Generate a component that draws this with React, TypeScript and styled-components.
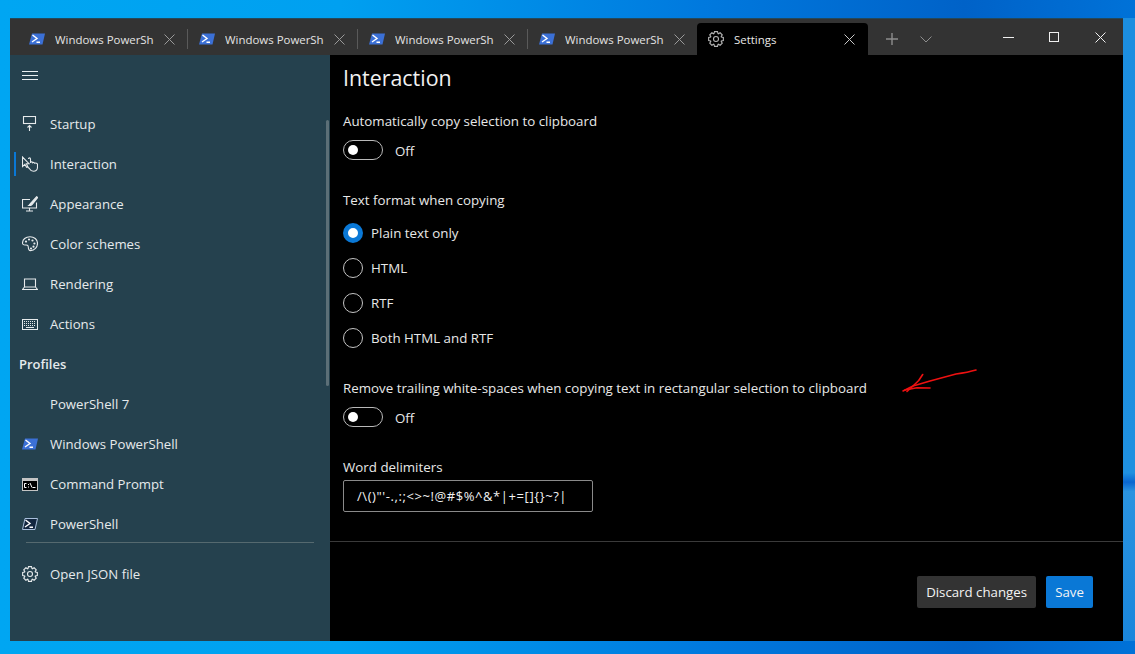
import React from "react";
import styled, { createGlobalStyle } from "styled-components";

const Global = createGlobalStyle`
  html, body { margin: 0; padding: 0; height: 100%; }
  body { font-family: "Open Sans", "Liberation Sans", sans-serif; overflow: hidden; }
  #root { height: 100%; }
  * { box-sizing: border-box; }
`;

const Desktop = styled.div`
  width: 1135px; height: 654px; padding: 18px 12px 13px 10px;
  background:
    linear-gradient(180deg, #1c8ee0 0%, #1f90e0 73%, #0a66d0 74.5%, #2a93e0 76%, #1a86dc 100%) right 0 top 18px / 12px 623px no-repeat,
    linear-gradient(90deg, #00a6f2 0%, #00a0f0 30%, #0079de 62%, #0062c8 85%, #0072d8 100%);
`;
const Win = styled.div`
  position: relative; height: 100%; display: flex; flex-direction: column;
  background: #000; border-top: 1px solid #24485a; color: #fff;
`;
const TabBar = styled.div`
  height: 36px; flex: none; display: flex; align-items: flex-end; background: #333333; padding-left: 8px;
`;
const Tab = styled.div<{ $active?: boolean }>`
  position: relative; width: ${(p) => (p.$active ? "171px" : "170px")}; height: 32px; flex: none; display: flex; align-items: center;
  margin-left: ${(p) => (p.$active ? "-1px" : "0")};
  padding: 0 13px 0 11px; border-radius: 4px 4px 0 0;
  background: ${(p) => (p.$active ? "#000" : "transparent")};
  color: ${(p) => (p.$active ? "#e8e8e8" : "#e4e4e4")};
`;
const TabSep = styled.span`
  position: absolute; right: 0; top: 6px; width: 1px; height: 20px; background: #5a5a5a;
`;
const TabGear = styled.span`
  display: flex; color: #b4b4b4;
`;
const TabTitle = styled.span`
  margin-left: 10px; flex: 1; font-size: 11.45px; white-space: nowrap; overflow: hidden;
`;
const TabTools = styled.div`
  display: flex; align-items: center; height: 32px; margin-left: 18px; gap: 22px; color: #8d8d8d;
`;
const Caption = styled.div`
  margin-left: auto; display: flex; align-self: flex-start; height: 36px;
`;
const CapBtn = styled.div`
  width: 46px; height: 36px; display: flex; align-items: center; justify-content: center; color: #f0f0f0;
`;
const Body = styled.div`
  flex: 1; display: flex; min-height: 0;
`;
const Sidebar = styled.nav`
  position: relative; width: 320px; flex: none; background: #25414e; display: flex; flex-direction: column;
  padding-top: 16px;
`;
const Burger = styled.div`
  height: 10px; padding-left: 12px; margin-bottom: 23px; color: #eaf0f2; display: flex; align-items: center;
`;
const NavItem = styled.div<{ $active?: boolean }>`
  position: relative; height: 40px; display: flex; align-items: center; padding-left: 12px; gap: 12px;
  font-size: 13.2px; color: #e6eaec;
  ${(p) => p.$active && `&::before { content: ""; position: absolute; left: 4px; top: 8px; width: 2px; height: 24px; background: #0a78d6; }`}
`;
const IconSlot = styled.span`
  width: 16px; height: 16px; flex: none; display: flex; align-items: center; justify-content: center;
`;
const Heading = styled.div`
  height: 40px; display: flex; align-items: center; padding-left: 9px; font-size: 13px; font-weight: 600; color: #e6eaec;
`;
const NavRule = styled.div`
  height: 1px; margin: -2px 16px 11px 16px; background: #55696f; flex: none;
`;
const ScrollThumb = styled.div`
  position: absolute; left: 316px; top: 65px; width: 3px; height: 266px; background: #5c6f77; border-radius: 2px;
`;
const Main = styled.main`
  flex: 1; min-width: 0; display: flex; flex-direction: column; background: #000;
`;
const Scroll = styled.div`
  flex: none; height: 487px; padding: 7px 0 0 13px; border-bottom: 1px solid #3a3a3a; position: relative;
`;
const Title = styled.h1`
  margin: 0 0 17px; font-size: 21.4px; line-height: 32px; font-weight: 400; color: #f2f2f2;
`;
const Label = styled.div`
  font-size: 13.33px; line-height: 20px; color: #e8e8e8; white-space: nowrap;
`;
const ToggleRow = styled.div`
  display: flex; align-items: center; height: 20px; margin-top: 9px; gap: 12px; font-size: 13.33px; color: #e8e8e8;
`;
const Track = styled.span`
  width: 40px; height: 20px; border: 1px solid #b9b9b9; border-radius: 10px; display: flex; align-items: center; padding-left: 4px;
`;
const Knob = styled.span`
  width: 10px; height: 10px; border-radius: 50%; background: #fff;
`;
const ToggleText = styled.span`
  margin-top: 2px;
`;
const Section = styled.section`
  margin-bottom: 30px;
`;
const RadioList = styled.div`
  display: flex; flex-direction: column; gap: 15px; margin-top: 13px;
`;
const RadioRow = styled.div`
  display: flex; align-items: center; height: 20px; gap: 8px; font-size: 13.33px; color: #e8e8e8;
`;
const RadioDot = styled.span<{ $on?: boolean }>`
  width: 20px; height: 20px; border-radius: 50%; display: flex; align-items: center; justify-content: center;
  border: ${(p) => (p.$on ? "5px solid #0a78d6" : "1px solid #c4c4c4")};
  background: ${(p) => (p.$on ? "#fff" : "transparent")};
`;
const Field = styled.div`
  width: 250px; height: 32px; margin-top: 3px; border: 1px solid #8a8a8a; border-radius: 2px;
  display: flex; align-items: center; padding-left: 13px; font-size: 13px; letter-spacing: .58px; color: #f2f2f2; white-space: nowrap;
`;
const Footer = styled.div`
  flex: 1; display: flex; justify-content: flex-end; align-items: flex-start; gap: 10px; padding: 34px 30px 0 0;
`;
const Button = styled.button<{ $primary?: boolean }>`
  height: 32px; min-width: 47px; border: 0; border-radius: 2px; padding: 0 9px; font: inherit; font-size: 13.25px; color: #f4f4f4;
  background: ${(p) => (p.$primary ? "#0a78d6" : "#333333")};
`;
const Ink = styled.svg`
  position: absolute; left: 0; top: 0; pointer-events: none;
`;

const stroke = { fill: "none", stroke: "currentColor", strokeWidth: 1.1 } as const;

const PsGlyph = () => (
  <path d="M3.500 2l4.500 3.500L3 9M7.500 9.200h3.500" fill="none" stroke="#fff" strokeWidth="1.400" />
);
const PsIcon = () => (
  <svg width="16" height="12" viewBox="0 0 16 12">
    <path d="M3 .5h13L13.500 11.500H0z" fill="#3b70d6" />
    <PsGlyph />
  </svg>
);
const PsDark = () => (
  <svg width="16" height="12" viewBox="0 0 16 12">
    <path d="M3 .5h12.500L13 11.500H.5z" fill="#12263f" stroke="#a9bfdc" strokeWidth="1" />
    <PsGlyph />
  </svg>
);
const CmdIcon = () => (
  <svg width="16" height="13" viewBox="0 0 16 13">
    <rect x="0" y="0" width="16" height="13" fill="#c4c4c4" />
    <rect x="1" y="3" width="14" height="9" fill="#000" />
    <path d="M4.500 5.500h-2v4h2M6.500 6v1M6.500 8.500v1M8 5l2 4.500M10.500 9.500h3" fill="none" stroke="#fff" strokeWidth="1" />
  </svg>
);
const gearPath = (() => {
  const pts: string[] = [];
  for (let i = 0; i < 8; i++) {
    const c = (i * Math.PI) / 4;
    [[5.7, -0.36], [7.5, -0.2], [7.5, 0.2], [5.7, 0.36]].forEach(([r, d]) => {
      pts.push(`${(8 + r * Math.cos(c + d)).toFixed(2)} ${(8 + r * Math.sin(c + d)).toFixed(2)}`);
    });
  }
  return `M${pts.join("L")}Z`;
})();
const Gear = () => (
  <svg width="16" height="16" viewBox="0 0 16 16" {...stroke}>
    <circle cx="8" cy="8" r="2.500" />
    <path d={gearPath} />
  </svg>
);
const Cross = ({ color = "currentColor" }: { color?: string }) => (
  <svg width="11" height="11" viewBox="0 0 11 11" fill="none" stroke={color} strokeWidth="1">
    <path d="M.5.5l10 10M10.500.5l-10 10" />
  </svg>
);
const StartupIcon = () => (
  <svg width="16" height="16" viewBox="0 0 16 16" {...stroke}>
    <rect x="1.500" y=".5" width="12" height="7" />
    <path d="M7.500 15V9.500M5.500 11.500l2-2 2 2" />
  </svg>
);
const HandIcon = () => (
  <svg width="16" height="16" viewBox="0 0 16 16" {...stroke}>
    <path d="M.5 1v9.500l2.400-2.200 1.600 3 1.300-.6-1.400-3h2.600z" />
    <path d="M6.500 3c0-1.500 2-1.500 2 0v4M8.500 6.200c1-.7 2-.3 2.200.5.8-.6 1.700-.2 2 .5 1-.5 2.800 0 2.800 1.300v2.700c0 2.400-1.700 4-4 4-2 0-3-.8-4-2.500L5.500 11" />
  </svg>
);
const BrushIcon = () => (
  <svg width="16" height="16" viewBox="0 0 16 16" {...stroke}>
    <path d="M8 3.500H.5v8.500h14V6.500M7.500 12v3M4 15h7" />
    <path d="M14.700.7L9.500 6.300l-1 1c-.6.6-.9 1.600-1.700 2.200 1.300.1 2.500-.3 3.200-1l1-1.100 4.800-6z" fill="#e6eaec" />
  </svg>
);
const PaletteIcon = () => (
  <svg width="16" height="16" viewBox="0 0 16 16" {...stroke}>
    <path d="M8 .7C3.800.7.5 3.500.5 7c0 1.500 1.400 2.100 2.800 2 1.700-.2 3 .3 3 2 0 1.700.5 3.600 2.200 3.600 4 0 7-3.300 7-7.300C15.500 3.400 12 .7 8 .7z" />
    <g fill="currentColor" stroke="none">
      <circle cx="4" cy="5.600" r="1.100" /><circle cx="7" cy="3.500" r="1.100" /><circle cx="10.500" cy="4.500" r="1.100" />
      <circle cx="12.400" cy="7.500" r="1.100" /><circle cx="11.500" cy="10.700" r="1.100" /><circle cx="9" cy="12.500" r="1.100" />
    </g>
  </svg>
);
const LaptopIcon = () => (
  <svg width="16" height="12" viewBox="0 0 16 12" {...stroke}>
    <path d="M2.500 1h11v8h-11zM2.500 9L.5 11.500h15L13.500 9" />
  </svg>
);
const KeyboardIcon = () => (
  <svg width="16" height="11" viewBox="0 0 16 11">
    <rect x=".5" y=".5" width="15" height="10" fill="none" stroke="currentColor" />
    <path d="M2 2.500h12M2 4.500h12M2 6.500h12" stroke="currentColor" strokeWidth="1" strokeDasharray="1 1" />
    <path d="M4 8.500h8" stroke="currentColor" strokeWidth="1" />
  </svg>
);

const tabs = [0, 1, 2, 3];
const topItems: [string, React.ReactNode][] = [
  ["Startup", <StartupIcon />],
  ["Interaction", <HandIcon />],
  ["Appearance", <BrushIcon />],
  ["Color schemes", <PaletteIcon />],
  ["Rendering", <LaptopIcon />],
  ["Actions", <KeyboardIcon />],
];
const profiles: [string, React.ReactNode][] = [
  ["PowerShell 7", null],
  ["Windows PowerShell", <PsIcon />],
  ["Command Prompt", <CmdIcon />],
  ["PowerShell", <PsDark />],
];
const radios = ["Plain text only", "HTML", "RTF", "Both HTML and RTF"];

const Toggle = () => (
  <ToggleRow>
    <Track><Knob /></Track>
    <ToggleText>Off</ToggleText>
  </ToggleRow>
);

export default function App() {
  return (
    <Desktop>
      <Global />
      <Win>
        <TabBar>
          {tabs.map((t) => (
            <Tab key={t}>
              <PsIcon />
              <TabTitle>Windows PowerSh</TabTitle>
              <Cross color="#9a9a9a" />
              <TabSep />
            </Tab>
          ))}
          <Tab $active>
            <TabGear><Gear /></TabGear>
            <TabTitle>Settings</TabTitle>
            <Cross color="#c8c8c8" />
          </Tab>
          <TabTools>
            <svg width="12" height="12" viewBox="0 0 12 12" stroke="currentColor" strokeWidth="1.400"><path d="M6 0v12M0 6h12" /></svg>
            <svg width="12" height="7" viewBox="0 0 12 7" fill="none" stroke="currentColor"><path d="M.5.5L6 6l5.500-5.500" /></svg>
          </TabTools>
          <Caption>
            <CapBtn><svg width="11" height="1" viewBox="0 0 11 1"><path d="M0 .5h11" stroke="currentColor" /></svg></CapBtn>
            <CapBtn><svg width="10" height="10" viewBox="0 0 10 10" fill="none" stroke="currentColor"><rect x=".5" y=".5" width="9" height="9" /></svg></CapBtn>
            <CapBtn><Cross /></CapBtn>
          </Caption>
        </TabBar>
        <Body>
          <Sidebar>
            <Burger>
              <svg width="16" height="10" viewBox="0 0 16 10" stroke="currentColor"><path d="M0 .5h16M0 4.500h16M0 8.500h16" /></svg>
            </Burger>
            {topItems.map(([label, icon]) => (
              <NavItem key={label} $active={label === "Interaction"}>
                <IconSlot>{icon}</IconSlot>{label}
              </NavItem>
            ))}
            <Heading>Profiles</Heading>
            {profiles.map(([label, icon]) => (
              <NavItem key={label}>
                <IconSlot>{icon}</IconSlot>{label}
              </NavItem>
            ))}
            <NavRule />
            <NavItem>
              <IconSlot><Gear /></IconSlot>Open JSON file
            </NavItem>
            <ScrollThumb />
          </Sidebar>
          <Main>
            <Scroll>
              <Title>Interaction</Title>
              <Section>
                <Label>Automatically copy selection to clipboard</Label>
                <Toggle />
              </Section>
              <Section>
                <Label>Text format when copying</Label>
                <RadioList>
                  {radios.map((r, i) => (
                    <RadioRow key={r}><RadioDot $on={i === 0} />{r}</RadioRow>
                  ))}
                </RadioList>
              </Section>
              <Section>
                <Label>Remove trailing white-spaces when copying text in rectangular selection to clipboard</Label>
                <Toggle />
              </Section>
              <Section>
                <Label>Word delimiters</Label>
                <Field>{"/\\()\"'-.,:;<>~!@#$%^&*|+=[]{}~?|"}</Field>
              </Section>
            </Scroll>
            <Footer>
              <Button>Discard changes</Button>
              <Button $primary>Save</Button>
            </Footer>
          </Main>
        </Body>
        <Ink width="1113" height="623" viewBox="10 18 1113 623" fill="none" stroke="#ee1111" strokeWidth="1.600" strokeLinecap="round" strokeLinejoin="round">
          <path d="M976 369c-7 2-13 3-20 4l-26 7-17 5-10 5" />
          <path d="M922.700 373.500l-4 6-5.700 5.500-6 5.500" />
          <path d="M905 389l12-2.300 13 .3" />
        </Ink>
      </Win>
    </Desktop>
  );
}
